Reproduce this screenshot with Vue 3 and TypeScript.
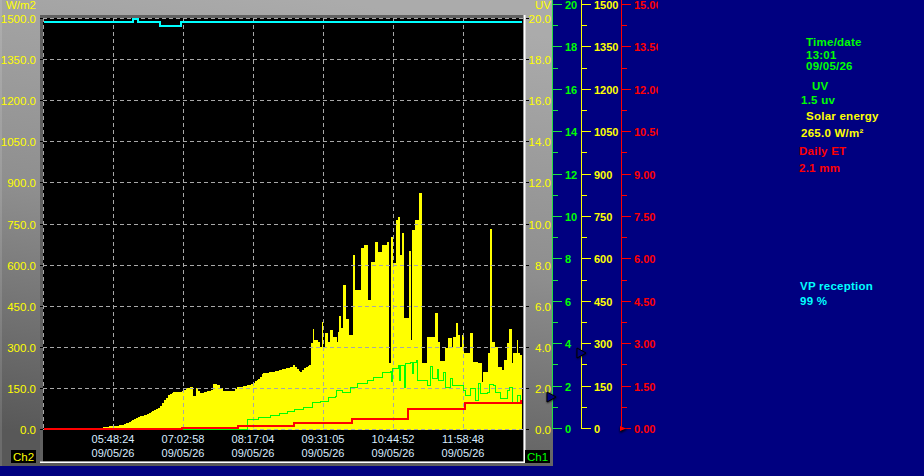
<script setup lang="ts">
import { computed } from 'vue'

type Pt = [number, number]

const plot = { left: 43, right: 523, top: 18, zero: 429 }

// one label per grid line, top to bottom
const solarLabels = ['1500.0', '1350.0', '1200.0', '1050.0', '900.0', '750.0', '600.0', '450.0', '300.0', '150.0', '0.0']
const uvLabels = ['20.0', '18.0', '16.0', '14.0', '12.0', '10.0', '8.0', '6.0', '4.0', '2.0', '0.0']
const rowYs = solarLabels.map((_, i) => Math.round(plot.top + i * 41.1))
const timeColumns = [
  { x: 113, time: '05:48:24' },
  { x: 183, time: '07:02:58' },
  { x: 253, time: '08:17:04' },
  { x: 323, time: '09:31:05' },
  { x: 393, time: '10:44:52' },
  { x: 463, time: '11:58:48' }
]

const solar: Pt[] = [
  [103, 427], [122, 425], [127, 423], [132, 420], [138, 417], [145, 415], [152, 411], [158, 408], [162, 403], [168, 395],
  [173, 392], [180, 392], [187, 388], [190, 387], [193, 396], [196, 388], [200, 393], [205, 392], [212, 390], [213, 384],
  [218, 385], [220, 388], [223, 391], [233, 391], [237, 387], [245, 386], [253, 383], [258, 379], [263, 373], [273, 372],
  [280, 370], [290, 367], [293, 365], [300, 372], [304, 368], [309, 365], [311, 343], [313, 329], [314, 340], [318, 342],
  [320, 347], [322, 322], [323, 347], [325, 333], [328, 342], [330, 330], [333, 337], [337, 342], [338, 332], [339, 316],
  [341, 328], [343, 285], [346, 319], [349, 335], [353, 255], [355, 290], [361, 248], [364, 245], [366, 245], [368, 300],
  [371, 262], [375, 242], [378, 252], [382, 245], [387, 242], [389, 363], [391, 237], [393, 263], [396, 220], [398, 217],
  [400, 255], [402, 233], [404, 318], [409, 251], [411, 340], [412, 230], [415, 220], [419, 193], [422, 363], [427, 337],
  [435, 313], [438, 342], [440, 361], [445, 348], [448, 338], [452, 347], [453, 337], [456, 323], [458, 335], [460, 347],
  [462, 335], [464, 353], [470, 333], [473, 362], [478, 363], [482, 382], [483, 372], [488, 353], [490, 229], [492, 342],
  [495, 347], [498, 367], [502, 370], [504, 360], [507, 343], [509, 329], [512, 363], [513, 353], [517, 340], [518, 353],
  [520, 355], [522, 357]
]

const uv: Pt[] = [
  [182, 429], [247, 419], [258, 417], [270, 415], [279, 413], [287, 411], [294, 409], [303, 407], [312, 402], [320, 401],
  [328, 397], [335, 396], [336, 390], [342, 392], [350, 387], [357, 383], [367, 380], [373, 377], [382, 372], [390, 371],
  [391, 381], [392, 368], [398, 365], [399, 380], [400, 365], [404, 387], [405, 363], [410, 362], [412, 373], [413, 362],
  [416, 360], [417, 380], [427, 385], [430, 366], [432, 378], [437, 369], [438, 380], [443, 372], [445, 387], [450, 378],
  [452, 385], [460, 385], [463, 390], [465, 395], [470, 388], [475, 400], [478, 383], [480, 393], [487, 392], [489, 384],
  [493, 385], [495, 392], [500, 398], [507, 390], [509, 387], [512, 403], [517, 395], [520, 400], [522, 400]
]

const et: Pt[] = [[44, 429], [182, 428], [238, 426], [294, 423], [352, 419], [408, 409], [465, 403], [521, 400]]

const cyan: Pt[] = [[44, 22], [133, 19], [138, 22], [160, 26], [181, 22], [522, 22]]

// the morning ramp is sampled finer than the points above, so fill it in
function fillRamp(points: Pt[], until: number): Pt[] {
  const out: Pt[] = []
  points.forEach(([x, y], i) => {
    const next = points[i + 1]
    out.push([x, y])
    if (!next || x >= until || next[0] - x <= 3) return
    for (let cx = x + 2; cx < next[0]; cx += 2) {
      out.push([cx, Math.round(y + ((next[1] - y) * (cx - x)) / (next[0] - x))])
    }
  })
  return out
}

// the recorder holds a value until the next sample, so every trace is drawn in steps
function stepped(points: Pt[]): string {
  return points.map(([x, y], i) => (i === 0 ? `M${x} ${y}` : `H${x}V${y}`)).join('')
}

const solarPath = computed(() => {
  const pts = fillRamp(solar, 311)
  const base = plot.zero + 1
  return `M${pts[0][0]} ${base}V${pts[0][1]}${stepped(pts).replace(/^M[^H]+/, '')}V${base}Z`
})
const uvPath = computed(() => stepped(uv))
const etPath = computed(() => stepped(et))
const cyanPath = computed(() => stepped(cyan))

function axis(x: number, labels: string[]) {
  const step = 424 / (labels.length - 1)
  return {
    x,
    ticks: labels.map((text, i) => ({ text, y: Math.round(4 + i * step) })),
    minors: labels.slice(1).map((_, i) => Math.round(4 + (i + 0.5) * step) + 0.5)
  }
}

const axes = [
  { name: 'green', ...axis(552.5, ['20', '18', '16', '14', '12', '10', '8', '6', '4', '2', '0']) },
  { name: 'yellow', ...axis(581.5, ['1500', '1350', '1200', '1050', '900', '750', '600', '450', '300', '150', '0']) },
  { name: 'red', ...axis(621.5, ['15.00', '13.50', '12.00', '10.50', '9.00', '7.50', '6.00', '4.50', '3.00', '1.50', '0.00']) }
]
</script>

<template>
  <div class="screen">
    <svg class="chart" width="658" height="476" viewBox="0 0 658 476">
      <defs>
        <linearGradient id="panel-fill" x1="0.6" y1="0" x2="0.4" y2="1">
          <stop offset="0" stop-color="#ababab" />
          <stop offset="0.5" stop-color="#8e8e8e" />
          <stop offset="1" stop-color="#585858" />
        </linearGradient>
        <filter id="soft" x="-50%" y="-50%" width="200%" height="200%">
          <feGaussianBlur stdDeviation="1" />
        </filter>
      </defs>

      <rect width="553" height="466" fill="url(#panel-fill)" />
      <rect width="2" height="466" fill="#fff" opacity="0.12" />
      <rect x="40" y="15" width="484" height="448" fill="#606060" />
      <rect x="43" y="18" width="480.5" height="443.5" fill="#000" />
      <rect x="523.5" y="15" width="2" height="448" fill="#fff" />
      <rect x="40" y="461.5" width="485" height="1.5" fill="#fff" />

      <path :d="solarPath" fill="#ffff00" shape-rendering="crispEdges" />

      <line v-for="y in rowYs" :key="y" class="grid" :x1="plot.left" :x2="plot.right" :y1="y + 0.5" :y2="y + 0.5" />
      <line class="grid" :x1="plot.left + 0.5" :x2="plot.left + 0.5" :y1="plot.top" :y2="plot.zero" />
      <line v-for="c in timeColumns" :key="c.x" class="grid" :x1="c.x + 0.5" :x2="c.x + 0.5" :y1="plot.top" :y2="plot.zero" />

      <path :d="uvPath" class="trace" stroke="#00ff00" stroke-width="1" />
      <path :d="cyanPath" class="trace" stroke="#00ffff" stroke-width="2" />
      <path :d="etPath" class="trace" stroke="#ff0000" stroke-width="2" />

      <g v-for="(y, i) in rowYs" :key="'row' + i">
        <line class="tick" x1="40" x2="43" :y1="y + 0.5" :y2="y + 0.5" />
        <line class="tick" x1="526" x2="529" :y1="y + 0.5" :y2="y + 0.5" />
        <text class="scale" x="36" :y="y + 5" text-anchor="end">{{ solarLabels[i] }}</text>
        <text class="scale" x="551" :y="y + 5" text-anchor="end">{{ uvLabels[i] }}</text>
      </g>
      <text class="scale" x="36" y="9" text-anchor="end">W/m2</text>
      <text class="scale" x="551" y="9" text-anchor="end">UV</text>

      <g v-for="c in timeColumns" :key="c.time">
        <text class="stamp" :x="c.x" y="443" text-anchor="middle">{{ c.time }}</text>
        <text class="stamp" :x="c.x" y="457" text-anchor="middle">09/05/26</text>
      </g>

      <rect x="11" y="450" width="25" height="13" fill="#000" />
      <text class="badge" x="23.5" y="461" fill="#ffff00" text-anchor="middle">Ch2</text>
      <rect x="525" y="450" width="25" height="13" fill="#000" />
      <text class="badge" x="537.5" y="461" fill="#00ff00" text-anchor="middle">Ch1</text>

      <g v-for="a in axes" :key="a.name" :class="'axis ' + a.name">
        <line :x1="a.x" :x2="a.x" y1="0" y2="429" />
        <g v-for="t in a.ticks" :key="t.text">
          <line :x1="a.x" :x2="a.x + 9" :y1="t.y + 0.5" :y2="t.y + 0.5" />
          <text :x="a.x + 12.5" :y="t.y + 4.5">{{ t.text }}</text>
        </g>
        <line v-for="m in a.minors" :key="m" :x1="a.x" :x2="a.x + 5" :y1="m" :y2="m" />
      </g>

      <polygon points="547,393 557,397.5 547,403" fill="#000" filter="url(#soft)" />
      <polygon points="547,392 556,397 547,402" fill="#000080" stroke="#000" />
      <polygon points="577,349 587,353.5 577,359" fill="#000" filter="url(#soft)" />
      <polygon points="577,348 586,353 577,358" fill="#000080" stroke="#000" />
      <polygon points="620,427 627,429.5 620,433" fill="#000" filter="url(#soft)" />
      <polygon points="620,426 626,428.5 620,431" fill="#ff0000" />
    </svg>

    <aside class="info">
      <p class="line green first in2">Time/date</p>
      <p class="line green in2 gap2">13:01</p>
      <p class="line green in2">09/05/26</p>
      <p class="line green in3 gap9">UV</p>
      <p class="line green in1 gap3">1.5 uv</p>
      <p class="line yellow in2 gap5">Solar energy</p>
      <p class="line yellow in1 gap6">265.0 W/m²</p>
      <p class="line red gap7">Daily ET</p>
      <p class="line red gap6">2.1 mm</p>
      <p class="line cyan in0 reception">VP reception</p>
      <p class="line cyan in0 gap4">99 %</p>
    </aside>
  </div>
</template>

<style scoped>
.screen { display: flex; width: 924px; height: 476px; background: #000080; overflow: hidden; }
.chart { display: block; flex: none; }

.grid { stroke: #a8a8a8; stroke-width: 1; stroke-dasharray: 4 3; shape-rendering: crispEdges; }
.trace { fill: none; shape-rendering: crispEdges; }
.tick { stroke: #000; stroke-width: 1; shape-rendering: crispEdges; }

.scale { fill: #ffff00; font: 11.5px "Liberation Sans", Arial, sans-serif; }
.stamp { fill: #d8ecff; font: 11px "Liberation Sans", Arial, sans-serif; }
.badge { font: 11.5px "Liberation Sans", Arial, sans-serif; }

.axis line { stroke-width: 1; shape-rendering: crispEdges; }
.axis text { font: bold 11px "Liberation Sans", Arial, sans-serif; }
.axis.green line { stroke: #22dd44; }
.axis.green text { fill: #00ff00; }
.axis.yellow line { stroke: #ffff00; }
.axis.yellow text { fill: #ffff00; }
.axis.red line { stroke: #ff0000; }
.axis.red text { fill: #ff0000; }

.info { flex: 1; padding-left: 141px; font: bold 11.5px/11px "Liberation Sans", Arial, sans-serif; letter-spacing: 0.25px; white-space: nowrap; }
.line { margin: 0; }
.first { margin-top: 37px; }
.green { color: #00ff00; }
.yellow { color: #ffff00; }
.red { color: #ff0000; }
.cyan { color: #00ffff; }
.in0 { padding-left: 1px; }
.in1 { padding-left: 2px; }
.in2 { padding-left: 7px; }
.in3 { padding-left: 13px; }
.gap2 { margin-top: 2px; }
.gap3 { margin-top: 3px; }
.gap4 { margin-top: 4px; }
.gap5 { margin-top: 5px; }
.gap6 { margin-top: 6px; }
.gap7 { margin-top: 7px; }
.gap9 { margin-top: 9px; }
.reception { margin-top: 107px; }
</style>

<style>
html, body { background: #000080; overflow: hidden; }
</style>
